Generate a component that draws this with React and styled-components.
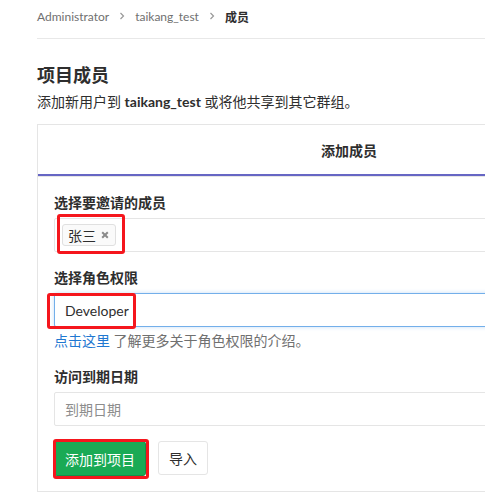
import React from 'react';
import styled, { createGlobalStyle } from 'styled-components';

const GlobalStyle = createGlobalStyle`
  html, body {
    margin: 0;
    padding: 0;
    background: #fff;
    overflow: hidden;
  }
  body {
    font-family: "Lato", "Noto Sans CJK SC", sans-serif;
    color: #2e2e2e;
    font-size: 14px;
  }
`;

const Page = styled.main`
  width: 624px;
  padding-left: 37px;
`;

const Breadcrumb = styled.nav`
  display: flex;
  align-items: center;
  gap: 10px;
  height: 32px;
  padding-bottom: 6px;
  border-bottom: 1px solid #e8e8e8;
  font-size: 12px;
  color: #707070;
  span.current {
    color: #2e2e2e;
    font-weight: 700;
  }
`;

const Chevron = () => (
  <svg width="6" height="8" viewBox="0 0 6 8">
    <path d="M1.5 1 L4.5 4 L1.5 7" fill="none" stroke="#999" strokeWidth="1.2" />
  </svg>
);

const Title = styled.h3`
  margin: 24px 0 0;
  font-size: 18px;
  line-height: 24px;
  font-weight: 700;
`;

const Lead = styled.p`
  margin: 5px 0 12px;
  font-size: 14px;
  line-height: 20px;
  b {
    font-weight: 700;
  }
`;

const Card = styled.section`
  border: 1px solid #e5e5e5;
`;

const CardHeader = styled.div`
  display: flex;
  justify-content: center;
  border-bottom: 1px solid #e5e5e5;
`;

const Tab = styled.div`
  flex: 1;
  height: 49px;
  display: flex;
  align-items: center;
  justify-content: center;
  font-weight: 700;
  font-size: 14px;
  border-bottom: 2px solid #6666c4;
`;

const CardBody = styled.div`
  padding: 16px 16px 15px;
`;

const Group = styled.div`
  margin-bottom: 16px;
`;

const Label = styled.label`
  display: block;
  font-weight: 700;
  font-size: 14px;
  line-height: 20px;
  margin-bottom: 5px;
`;

const Field = styled.div`
  position: relative;
  box-sizing: border-box;
  height: 34px;
  display: flex;
  align-items: center;
  padding: 0 ${(p) => (p.$tight ? 7 : 10)}px;
  border: 1px solid ${(p) => (p.$focus ? '#73afea' : '#e5e5e5')};
  box-shadow: ${(p) => (p.$focus ? '0 0 4px rgba(115, 175, 234, 0.4)' : 'none')};
  border-radius: 2px;
  color: ${(p) => (p.$placeholder ? '#8c8c8c' : '#2e2e2e')};
  font-size: 14px;
`;

const Tag = styled.span`
  position: relative;
  display: inline-flex;
  align-items: center;
  gap: 5px;
  height: 22px;
  box-sizing: border-box;
  padding: 0 6px 0 5px;
  background: #fafafa;
  border: 1px solid #e0e0e0;
  border-radius: 3px;
  font-size: 14px;
`;

const Remove = () => (
  <svg width="8" height="8" viewBox="0 0 8 8">
    <path d="M1.2 1.2 L6.8 6.8 M6.8 1.2 L1.2 6.8" stroke="#8a8a8a" strokeWidth="2" />
  </svg>
);

const Mark = styled.span`
  position: absolute;
  top: ${(p) => p.$t}px;
  left: ${(p) => p.$l}px;
  right: ${(p) => p.$r}px;
  bottom: ${(p) => p.$b}px;
  border: ${(p) => p.$w || 3}px solid #f5161d;
  border-radius: 3px;
  pointer-events: none;
`;

const Help = styled.p`
  margin: 4px 0 16px;
  font-size: 14px;
  line-height: 20px;
  color: #707070;
  a {
    color: #1f78d1;
    text-decoration: none;
  }
`;

const Actions = styled.div`
  display: flex;
  gap: 12px;
  margin-top: 15px;
`;

const Button = styled.button`
  position: relative;
  height: ${(p) => (p.$primary ? 35 : 34)}px;
  padding: 0 10px;
  font-family: inherit;
  font-size: 14px;
  border-radius: 3px;
  border: 1px solid ${(p) => (p.$primary ? '#168f48' : '#e5e5e5')};
  background: ${(p) => (p.$primary ? '#1aaa55' : '#fff')};
  color: ${(p) => (p.$primary ? '#fff' : '#2e2e2e')};
`;

export default function App() {
  return (
    <>
      <GlobalStyle />
      <Page>
        <Breadcrumb>
          <span>Administrator</span>
          <Chevron />
          <span>taikang_test</span>
          <Chevron />
          <span className="current">成员</span>
        </Breadcrumb>
        <Title>项目成员</Title>
        <Lead>
          添加新用户到 <b>taikang_test</b> 或将他共享到其它群组。
        </Lead>
        <Card>
          <CardHeader>
            <Tab>添加成员</Tab>
          </CardHeader>
          <CardBody>
            <Group>
              <Label>选择要邀请的成员</Label>
              <Field $tight>
                <Tag>
                  张三
                  <Remove />
                  <Mark $t={-11} $l={-6} $r={-10} $b={-9} />
                </Tag>
              </Field>
            </Group>
            <Label>选择角色权限</Label>
            <Field $focus>
              <Mark $t={-1} $l={-8} $r={507} $b={-3} />
              <span>Developer</span>
            </Field>
            <Help>
              <a href="#">点击这里</a> 了解更多关于角色权限的介绍。
            </Help>
            <Label>访问到期日期</Label>
            <Field $placeholder>到期日期</Field>
            <Actions>
              <Button $primary>
                添加到项目
                <Mark $t={-3} $l={-2} $r={-4} $b={-4} />
              </Button>
              <Button>导入</Button>
            </Actions>
          </CardBody>
        </Card>
      </Page>
    </>
  );
}
